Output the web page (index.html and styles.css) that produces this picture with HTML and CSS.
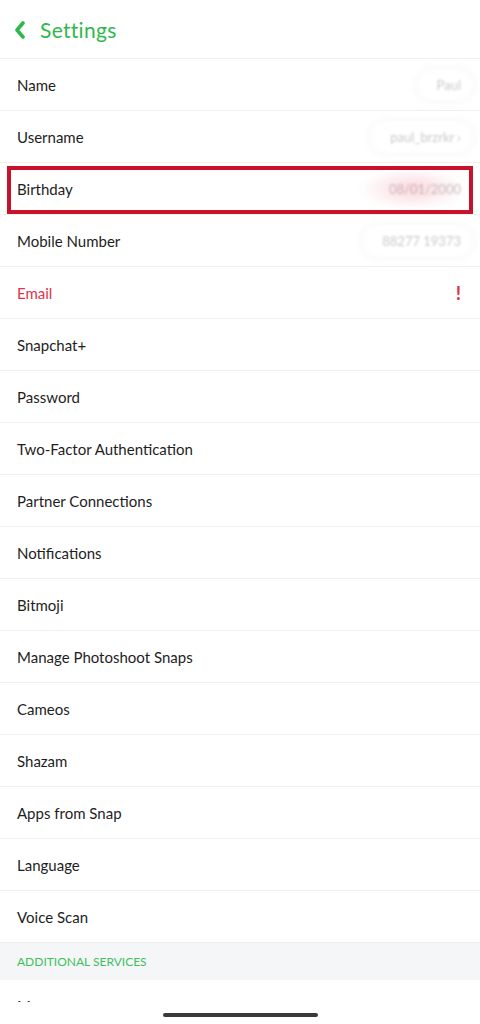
FILE: index.html
```html
<!DOCTYPE html>
<html>
<head>
	<meta charset="UTF-8">
	<title>Settings</title>
	<link rel="stylesheet" href="styles.css">
</head>
<body>
	<div class="header">
		<svg class="back" width="14" height="18" viewBox="0 0 14 18">
			<path d="M10 2 L4 9 L10 16" fill="none" stroke="#2fb84c" stroke-width="3.6" stroke-linecap="round" stroke-linejoin="round"/>
		</svg>
		<span class="title">Settings</span>
	</div>
	<div class="list">
		<div class="row"><span>Name</span><span class="value"><i class="blurpill"></i>Paul</span></div>
		<div class="row"><span>Username</span><span class="value"><i class="blurpill"></i>paul_brzrkr &rsaquo;</span></div>
		<div class="row highlight"><span>Birthday</span><span class="value"><i class="blurred red"></i>08/01/2000</span></div>
		<div class="row"><span>Mobile Number</span><span class="value"><i class="blurpill"></i>88277 19373</span></div>
		<div class="row"><span class="warn">Email</span><span class="bang">!</span></div>
		<div class="row"><span>Snapchat+</span></div>
		<div class="row"><span>Password</span></div>
		<div class="row"><span>Two-Factor Authentication</span></div>
		<div class="row"><span>Partner Connections</span></div>
		<div class="row"><span>Notifications</span></div>
		<div class="row"><span>Bitmoji</span></div>
		<div class="row"><span>Manage Photoshoot Snaps</span></div>
		<div class="row"><span>Cameos</span></div>
		<div class="row"><span>Shazam</span></div>
		<div class="row"><span>Apps from Snap</span></div>
		<div class="row"><span>Language</span></div>
		<div class="row"><span>Voice Scan</span></div>
		<div class="section">ADDITIONAL SERVICES</div>
		<div class="row"><span>Manage</span></div>
	</div>
	<div class="homebar"><div class="indicator"></div></div>
</body>
</html>
```

FILE: styles.css
```css
body {
	margin: 0;
	background: #fff;
	font-family: Lato, "Open Sans", sans-serif;
	color: #1e1e1e;
	overflow: hidden;
	height: 1024px;
	position: relative;
}

.header {
	height: 59px;
	display: flex;
	align-items: center;
	padding-left: 13px;
	gap: 13px;
	border-bottom: 1px solid #f0f0f0;
	box-sizing: border-box;
	padding-top: 1px;
}

.title {
	color: #2fb84c;
	font-size: 21px;
	letter-spacing: 0.3px;
}

.row {
	height: 52px;
	display: flex;
	align-items: center;
	justify-content: space-between;
	padding: 0 17px;
	border-bottom: 1px solid #efefef;
	box-sizing: border-box;
	font-size: 15px;
	position: relative;
}

.highlight::after {
	content: "";
	position: absolute;
	left: 7px;
	right: 7px;
	top: 3px;
	bottom: 0px;
	border: 4px solid #c8112b;
}

.value {
	color: #cacaca;
	font-size: 13px;
	filter: blur(1.2px);
	position: relative;
	margin-right: 2px;
}

.blurpill {
	position: absolute;
	left: -22px;
	right: -14px;
	top: -10px;
	bottom: -10px;
	border: 1px solid #eaeaea;
	border-radius: 20px;
	filter: blur(2px);
}

.blurred.red {
	position: absolute;
	left: -30px;
	right: -6px;
	top: -12px;
	bottom: -12px;
	background: radial-gradient(ellipse at center, rgba(225, 60, 80, 0.22), rgba(255, 255, 255, 0) 70%);
	filter: blur(4px);
}

.warn {
	color: #e0334a;
}

.bang {
	color: #e0334a;
	font-weight: bold;
	font-size: 19px;
	margin-right: 2px;
}

.section {
	height: 37px;
	background: #f5f6f7;
	color: #3fbf5e;
	font-size: 12px;
	display: flex;
	align-items: center;
	padding-left: 17px;
}

.homebar {
	position: absolute;
	left: 0;
	right: 0;
	bottom: 0;
	height: 22px;
	background: #fff;
	display: flex;
	justify-content: center;
	padding-top: 11px;
	box-sizing: border-box;
}

.indicator {
	width: 155px;
	height: 4px;
	border-radius: 2px;
	background: #3a3a3a;
}
```
